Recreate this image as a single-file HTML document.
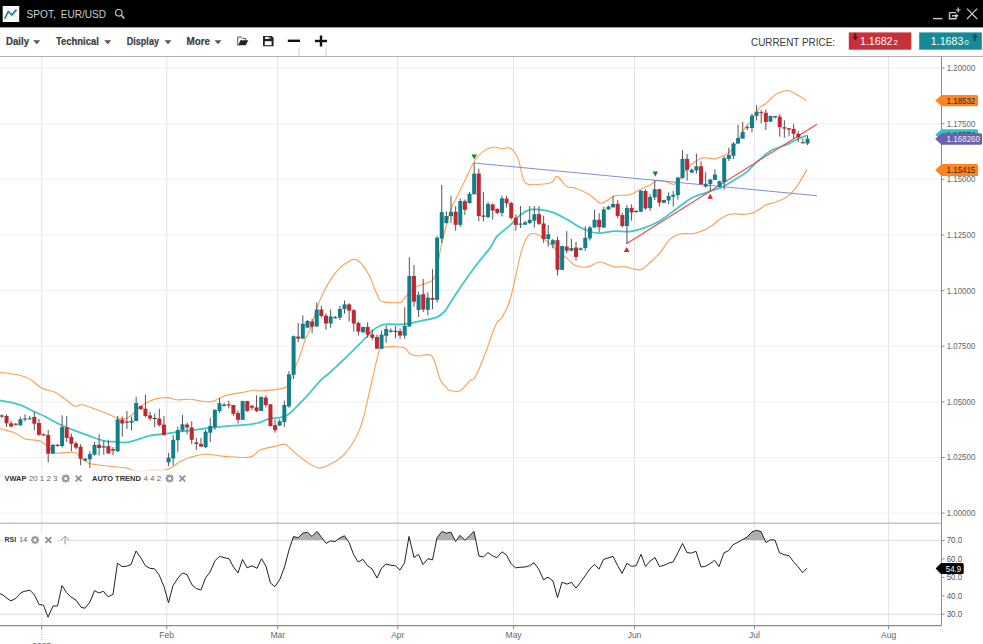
<!DOCTYPE html><html><head><meta charset="utf-8"><style>html,body{margin:0;padding:0;background:#fff;width:983px;height:644px;overflow:hidden}svg{display:block}text{font-family:"Liberation Sans",sans-serif}</style></head><body><svg width="983" height="644" viewBox="0 0 983 644"><rect width="983" height="644" fill="#fff"/><line x1="41.7" y1="56.5" x2="41.7" y2="625.6" stroke="#e3e3e3" stroke-width="1"/><line x1="166.7" y1="56.5" x2="166.7" y2="625.6" stroke="#e3e3e3" stroke-width="1"/><line x1="277.7" y1="56.5" x2="277.7" y2="625.6" stroke="#e3e3e3" stroke-width="1"/><line x1="397.8" y1="56.5" x2="397.8" y2="625.6" stroke="#e3e3e3" stroke-width="1"/><line x1="513.6" y1="56.5" x2="513.6" y2="625.6" stroke="#e3e3e3" stroke-width="1"/><line x1="634.5" y1="56.5" x2="634.5" y2="625.6" stroke="#e3e3e3" stroke-width="1"/><line x1="754.4" y1="56.5" x2="754.4" y2="625.6" stroke="#e3e3e3" stroke-width="1"/><line x1="888.6" y1="56.5" x2="888.6" y2="625.6" stroke="#e3e3e3" stroke-width="1"/><line x1="0" y1="68.1" x2="941.5" y2="68.1" stroke="#efefef" stroke-width="1"/><line x1="0" y1="123.7" x2="941.5" y2="123.7" stroke="#efefef" stroke-width="1"/><line x1="0" y1="179.3" x2="941.5" y2="179.3" stroke="#efefef" stroke-width="1"/><line x1="0" y1="235.0" x2="941.5" y2="235.0" stroke="#efefef" stroke-width="1"/><line x1="0" y1="290.6" x2="941.5" y2="290.6" stroke="#efefef" stroke-width="1"/><line x1="0" y1="346.2" x2="941.5" y2="346.2" stroke="#efefef" stroke-width="1"/><line x1="0" y1="401.9" x2="941.5" y2="401.9" stroke="#efefef" stroke-width="1"/><line x1="0" y1="457.5" x2="941.5" y2="457.5" stroke="#efefef" stroke-width="1"/><line x1="0" y1="513.1" x2="941.5" y2="513.1" stroke="#efefef" stroke-width="1"/><line x1="0" y1="540.4" x2="941.5" y2="540.4" stroke="#dcdcdc" stroke-width="1"/><line x1="0" y1="614.3" x2="941.5" y2="614.3" stroke="#dcdcdc" stroke-width="1"/><path d="M0.0,372.2 C3.3,372.7 15.0,374.0 20.0,375.2 C25.0,376.4 26.3,376.9 30.0,379.1 C33.7,381.3 37.8,386.1 42.0,388.3 C46.2,390.5 51.2,390.4 55.0,392.2 C58.8,394.0 61.7,396.8 65.0,399.1 C68.3,401.5 72.2,405.4 75.0,406.3 C77.8,407.2 78.7,404.3 82.0,404.8 C85.3,405.3 90.7,407.6 95.0,409.1 C99.3,410.6 104.3,412.4 108.0,413.9 C111.7,415.3 114.2,417.0 117.0,417.8 C119.8,418.6 122.5,419.2 125.0,418.7 C127.5,418.2 129.8,416.7 132.0,415.0 C134.2,413.3 135.5,410.6 138.0,408.5 C140.5,406.4 144.2,404.2 147.0,402.6 C149.8,401.0 151.7,399.9 155.0,399.1 C158.3,398.3 163.3,397.5 167.0,397.6 C170.7,397.7 173.2,399.5 177.0,399.8 C180.8,400.1 184.5,399.0 190.0,399.3 C195.5,399.6 204.2,402.4 210.0,401.8 C215.8,401.2 220.0,397.2 225.0,395.7 C230.0,394.2 235.0,393.8 240.0,392.9 C245.0,391.9 251.7,390.3 255.0,390.0 C258.3,389.7 255.2,391.3 260.0,391.0 C264.8,390.7 279.0,389.6 284.0,388.1 C289.0,386.6 288.2,385.2 290.0,381.9 C291.8,378.5 293.3,372.4 295.0,368.0 C296.7,363.6 298.3,360.2 300.0,355.5 C301.7,350.8 303.3,344.4 305.0,340.0 C306.7,335.6 307.5,336.0 310.0,329.3 C312.5,322.6 316.7,308.1 320.0,300.0 C323.3,291.9 326.7,285.8 330.0,280.4 C333.3,275.0 336.7,271.2 340.0,267.9 C343.3,264.6 347.3,262.1 350.0,260.7 C352.7,259.3 354.0,259.0 356.0,259.6 C358.0,260.2 359.7,261.4 362.0,264.3 C364.3,267.2 367.8,272.5 370.0,276.8 C372.2,281.1 373.3,286.1 375.0,290.0 C376.7,293.9 378.3,298.0 380.0,300.0 C381.7,302.0 381.7,301.7 385.0,302.1 C388.3,302.5 397.0,302.9 400.0,302.5 C403.0,302.1 401.3,301.9 403.0,300.0 C404.7,298.1 407.9,293.7 410.2,291.4 C412.5,289.1 413.3,288.1 417.0,286.3 C420.7,284.5 429.1,283.2 432.4,280.3 C435.7,277.4 435.3,274.8 436.7,269.2 C438.1,263.6 439.6,253.5 441.0,247.0 C442.4,240.5 443.7,235.8 445.2,230.0 C446.7,224.2 448.4,216.9 450.0,212.0 C451.6,207.1 452.5,205.8 455.0,200.5 C457.5,195.2 461.7,187.1 465.0,180.4 C468.3,173.7 471.7,165.2 475.0,160.2 C478.3,155.1 481.7,152.2 485.0,150.1 C488.3,147.9 492.2,147.5 495.0,147.3 C497.8,147.1 499.5,148.8 502.0,148.9 C504.5,149.0 507.3,146.6 510.0,148.1 C512.7,149.6 515.5,152.5 518.0,158.2 C520.5,163.9 521.3,178.1 525.0,182.4 C528.7,186.7 535.5,184.2 540.0,184.2 C544.5,184.2 549.2,183.6 552.0,182.3 C554.8,181.0 554.5,175.7 557.0,176.4 C559.5,177.1 564.0,184.6 567.0,186.5 C570.0,188.4 571.2,186.6 575.0,188.0 C578.8,189.4 585.8,192.5 590.0,195.0 C594.2,197.5 597.2,202.2 600.0,203.1 C602.8,204.0 604.5,201.7 607.0,200.5 C609.5,199.3 611.2,196.8 615.0,195.8 C618.8,194.8 625.8,195.8 630.0,194.7 C634.2,193.6 636.7,191.1 640.0,189.5 C643.3,187.9 647.2,186.5 650.0,185.0 C652.8,183.5 654.2,181.2 657.0,180.7 C659.8,180.2 664.2,181.3 667.0,181.9 C669.8,182.5 671.8,184.7 674.0,184.3 C676.2,183.9 678.2,181.8 680.0,179.6 C681.8,177.4 682.8,173.8 685.0,171.1 C687.2,168.4 690.0,165.5 693.0,163.3 C696.0,161.1 699.3,158.6 703.0,157.9 C706.7,157.2 711.3,159.4 715.0,158.9 C718.7,158.4 722.5,156.0 725.0,154.8 C727.5,153.6 728.0,153.7 730.0,151.6 C732.0,149.5 734.5,146.4 737.0,142.5 C739.5,138.6 742.8,131.4 745.0,128.0 C747.2,124.6 748.4,124.3 750.0,122.3 C751.6,120.2 753.0,118.2 754.7,115.7 C756.4,113.2 758.3,109.2 760.1,107.2 C761.9,105.2 763.0,106.0 765.5,104.0 C768.0,102.0 771.9,97.2 774.8,95.1 C777.6,93.0 780.3,92.3 782.6,91.6 C784.9,90.9 786.5,90.2 788.8,90.7 C791.1,91.2 793.5,92.8 796.5,94.4 C799.5,96.1 804.9,99.6 806.6,100.6" fill="none" stroke="#fa9f55" stroke-width="1.1" stroke-linejoin="round"/><path d="M0.0,428.7 C2.5,429.4 10.8,431.3 15.0,433.0 C19.2,434.7 20.8,437.5 25.0,438.9 C29.2,440.2 35.8,439.5 40.0,441.1 C44.2,442.7 47.5,446.7 50.0,448.7 C52.5,450.7 52.5,452.4 55.0,453.0 C57.5,453.6 61.7,452.7 65.0,452.6 C68.3,452.5 72.2,451.6 75.0,452.6 C77.8,453.6 79.5,456.7 82.0,458.5 C84.5,460.3 86.2,462.3 90.0,463.5 C93.8,464.7 99.2,465.0 105.0,465.7 C110.8,466.4 120.0,466.9 125.0,467.8 C130.0,468.7 130.8,470.7 135.0,471.1 C139.2,471.5 145.0,470.6 150.0,470.4 C155.0,470.2 161.3,470.5 165.0,470.0 C168.7,469.5 169.5,468.6 172.0,467.2 C174.5,465.8 177.0,463.3 180.0,461.7 C183.0,460.1 185.8,458.7 190.0,457.5 C194.2,456.3 199.2,454.5 205.0,454.3 C210.8,454.1 217.5,455.9 225.0,456.4 C232.5,456.9 244.2,458.2 250.0,457.1 C255.8,456.0 255.8,451.8 260.0,450.0 C264.2,448.2 270.8,447.3 275.0,446.4 C279.2,445.5 281.7,443.5 285.0,444.6 C288.3,445.7 291.7,450.2 295.0,452.9 C298.3,455.6 301.2,458.2 305.0,460.7 C308.8,463.2 313.8,467.3 318.0,467.9 C322.2,468.5 325.5,466.7 330.0,464.3 C334.5,461.9 340.0,459.6 345.0,453.6 C350.0,447.7 355.8,439.3 360.0,428.6 C364.2,417.9 367.5,399.6 370.0,389.4 C372.5,379.2 373.3,374.4 375.0,367.6 C376.7,360.8 378.3,352.1 380.0,348.7 C381.7,345.3 382.5,347.4 385.0,347.1 C387.5,346.8 391.7,346.5 395.0,346.7 C398.3,346.9 402.5,347.0 405.0,348.2 C407.5,349.4 407.8,352.4 410.0,353.7 C412.2,355.0 414.3,355.6 418.0,356.0 C421.7,356.4 428.3,352.3 432.0,356.2 C435.7,360.1 437.5,373.9 440.0,379.2 C442.5,384.5 445.3,386.3 447.0,388.2 C448.7,390.1 447.8,390.0 450.0,390.4 C452.2,390.8 456.7,392.4 460.0,390.8 C463.3,389.2 467.5,382.9 470.0,380.7 C472.5,378.5 472.5,382.0 475.0,377.6 C477.5,373.2 482.2,361.5 485.0,354.3 C487.8,347.1 490.0,339.5 492.0,334.2 C494.0,328.9 495.3,325.3 497.0,322.5 C498.7,319.7 499.8,320.9 502.0,317.2 C504.2,313.4 507.0,310.1 510.0,300.0 C513.0,289.9 517.5,266.4 520.0,256.6 C522.5,246.8 523.2,245.0 524.9,241.3 C526.5,237.6 527.6,235.3 529.9,234.2 C532.2,233.1 535.4,233.5 538.5,234.9 C541.6,236.3 545.8,240.7 548.4,242.7 C551.0,244.7 552.4,245.0 554.1,247.0 C555.8,249.0 557.2,253.0 558.4,254.8 C559.6,256.6 560.1,257.3 561.3,257.7 C562.5,258.1 563.1,255.7 565.5,257.0 C567.9,258.3 571.7,263.9 575.5,265.5 C579.3,267.1 584.3,267.5 588.3,266.9 C592.3,266.3 595.4,262.0 599.7,262.0 C604.0,262.0 609.7,266.1 614.0,266.9 C618.3,267.7 621.0,266.4 625.3,266.9 C629.6,267.4 635.9,270.5 640.0,269.8 C644.1,269.1 646.7,265.4 650.0,262.5 C653.3,259.6 656.7,256.6 660.0,252.7 C663.3,248.8 666.7,242.5 670.0,239.4 C673.3,236.3 675.8,235.0 680.0,234.0 C684.2,233.0 690.0,234.4 695.0,233.2 C700.0,232.0 705.8,229.3 710.0,227.0 C714.2,224.7 716.7,221.3 720.0,219.2 C723.3,217.1 725.8,215.0 730.0,214.2 C734.2,213.4 740.8,214.7 745.0,214.3 C749.2,213.9 751.7,213.5 755.0,212.0 C758.3,210.5 761.7,207.1 765.0,205.5 C768.3,203.9 771.7,203.4 775.0,202.2 C778.3,200.9 781.7,200.2 785.0,198.0 C788.3,195.8 791.3,193.9 795.0,189.2 C798.7,184.5 805.0,172.9 807.0,169.6" fill="none" stroke="#fa9f55" stroke-width="1.1" stroke-linejoin="round"/><line x1="474" y1="163" x2="817" y2="195.7" stroke="#7b8fe0" stroke-width="1"/><path d="M0.0,400.4 C3.3,401.1 14.5,403.0 20.0,404.8 C25.5,406.6 28.8,409.2 33.0,411.1 C37.2,413.1 40.5,414.3 45.0,416.5 C49.5,418.7 55.0,422.1 60.0,424.5 C65.0,426.9 70.0,428.7 75.0,430.6 C80.0,432.5 85.0,434.4 90.0,436.1 C95.0,437.9 100.8,440.2 105.0,441.1 C109.2,442.0 111.7,441.4 115.0,441.7 C118.3,441.9 121.7,442.8 125.0,442.6 C128.3,442.4 130.8,441.5 135.0,440.4 C139.2,439.2 145.0,436.8 150.0,435.7 C155.0,434.6 160.0,434.6 165.0,433.9 C170.0,433.2 174.2,432.5 180.0,431.7 C185.8,430.9 193.3,429.9 200.0,429.1 C206.7,428.3 211.7,427.6 220.0,426.8 C228.3,426.0 243.3,425.1 250.0,424.3 C256.7,423.6 256.7,423.3 260.0,422.3 C263.3,421.3 266.7,419.2 270.0,418.4 C273.3,417.6 277.2,418.1 280.0,417.6 C282.8,417.1 284.5,416.9 287.0,415.3 C289.5,413.8 292.0,411.2 295.0,408.3 C298.0,405.4 300.8,402.7 305.0,398.2 C309.2,393.7 315.8,385.4 320.0,381.1 C324.2,376.8 325.8,376.1 330.0,372.3 C334.2,368.5 340.0,363.1 345.0,358.3 C350.0,353.5 355.5,348.1 360.0,343.6 C364.5,339.1 368.7,334.1 372.0,331.1 C375.3,328.1 377.3,326.9 380.0,325.7 C382.7,324.5 384.7,324.4 388.0,324.2 C391.3,324.0 396.3,324.6 400.0,324.5 C403.7,324.4 406.7,324.0 410.0,323.4 C413.3,322.8 415.5,322.2 420.0,321.1 C424.5,320.1 432.8,318.8 437.0,317.1 C441.2,315.4 442.5,313.8 445.0,310.9 C447.5,308.0 449.5,303.8 452.0,300.0 C454.5,296.2 456.2,293.4 460.0,287.9 C463.8,282.3 470.0,273.3 475.0,266.7 C480.0,260.1 486.3,253.1 490.0,248.1 C493.7,243.1 493.7,240.2 497.0,236.4 C500.3,232.6 506.2,228.8 510.0,225.3 C513.8,221.8 516.7,217.8 520.0,215.2 C523.3,212.6 526.7,210.6 530.0,209.7 C533.3,208.8 536.3,209.3 540.0,209.7 C543.7,210.1 547.8,210.7 552.0,212.1 C556.2,213.5 560.3,215.8 565.0,218.3 C569.7,220.8 575.8,225.1 580.0,227.3 C584.2,229.5 586.7,230.5 590.0,231.5 C593.3,232.5 595.8,233.2 600.0,233.1 C604.2,233.0 610.0,231.3 615.0,231.1 C620.0,230.8 625.0,232.2 630.0,231.6 C635.0,231.0 640.0,229.5 645.0,227.7 C650.0,225.9 655.0,223.7 660.0,220.7 C665.0,217.7 670.0,213.5 675.0,209.9 C680.0,206.3 685.8,201.5 690.0,199.0 C694.2,196.5 695.8,196.2 700.0,194.7 C704.2,193.1 711.1,191.0 715.0,189.7 C718.9,188.3 719.6,188.5 723.3,186.6 C727.0,184.7 733.3,180.6 737.2,178.2 C741.1,175.8 743.7,174.5 746.6,172.1 C749.5,169.7 750.9,167.4 754.9,163.8 C758.9,160.2 765.5,154.0 770.8,150.8 C776.1,147.6 782.4,146.5 786.6,144.7 C790.8,142.9 792.6,141.6 795.9,140.0 C799.2,138.4 804.8,136.2 806.6,135.4" fill="none" stroke="#3ec9cb" stroke-width="1.8" stroke-linejoin="round"/><line x1="626.5" y1="243.7" x2="816.9" y2="124.2" stroke="#f04545" stroke-width="1.1"/><line x1="1.90" y1="414.4" x2="1.90" y2="417.8" stroke="#555555" stroke-width="1"/><line x1="6.53" y1="414.4" x2="6.53" y2="427.0" stroke="#555555" stroke-width="1"/><line x1="11.16" y1="421.1" x2="11.16" y2="427.5" stroke="#555555" stroke-width="1"/><line x1="15.79" y1="423.0" x2="15.79" y2="425.5" stroke="#555555" stroke-width="1"/><line x1="20.42" y1="416.8" x2="20.42" y2="426.1" stroke="#555555" stroke-width="1"/><line x1="25.05" y1="414.4" x2="25.05" y2="421.5" stroke="#555555" stroke-width="1"/><line x1="29.68" y1="416.0" x2="29.68" y2="419.6" stroke="#555555" stroke-width="1"/><line x1="34.31" y1="412.0" x2="34.31" y2="430.4" stroke="#555555" stroke-width="1"/><line x1="38.94" y1="418.9" x2="38.94" y2="436.0" stroke="#555555" stroke-width="1"/><line x1="43.57" y1="433.5" x2="43.57" y2="436.0" stroke="#555555" stroke-width="1"/><line x1="48.20" y1="429.9" x2="48.20" y2="462.5" stroke="#555555" stroke-width="1"/><line x1="52.83" y1="444.0" x2="52.83" y2="454.0" stroke="#555555" stroke-width="1"/><line x1="57.46" y1="444.0" x2="57.46" y2="446.5" stroke="#555555" stroke-width="1"/><line x1="62.09" y1="415.3" x2="62.09" y2="447.6" stroke="#555555" stroke-width="1"/><line x1="66.72" y1="415.9" x2="66.72" y2="442.0" stroke="#555555" stroke-width="1"/><line x1="71.35" y1="433.6" x2="71.35" y2="451.3" stroke="#555555" stroke-width="1"/><line x1="75.98" y1="441.4" x2="75.98" y2="449.4" stroke="#555555" stroke-width="1"/><line x1="80.61" y1="444.2" x2="80.61" y2="465.3" stroke="#555555" stroke-width="1"/><line x1="85.24" y1="457.8" x2="85.24" y2="461.5" stroke="#555555" stroke-width="1"/><line x1="89.87" y1="451.3" x2="89.87" y2="468.0" stroke="#555555" stroke-width="1"/><line x1="94.50" y1="442.0" x2="94.50" y2="455.6" stroke="#555555" stroke-width="1"/><line x1="99.13" y1="434.2" x2="99.13" y2="455.4" stroke="#555555" stroke-width="1"/><line x1="103.76" y1="440.5" x2="103.76" y2="454.7" stroke="#555555" stroke-width="1"/><line x1="108.39" y1="439.7" x2="108.39" y2="453.5" stroke="#555555" stroke-width="1"/><line x1="113.02" y1="447.0" x2="113.02" y2="455.0" stroke="#555555" stroke-width="1"/><line x1="117.65" y1="416.0" x2="117.65" y2="452.0" stroke="#555555" stroke-width="1"/><line x1="122.28" y1="416.5" x2="122.28" y2="436.7" stroke="#555555" stroke-width="1"/><line x1="126.91" y1="411.0" x2="126.91" y2="429.0" stroke="#555555" stroke-width="1"/><line x1="131.54" y1="416.5" x2="131.54" y2="430.5" stroke="#555555" stroke-width="1"/><line x1="136.17" y1="396.8" x2="136.17" y2="421.1" stroke="#555555" stroke-width="1"/><line x1="140.80" y1="405.6" x2="140.80" y2="409.5" stroke="#555555" stroke-width="1"/><line x1="145.43" y1="394.8" x2="145.43" y2="417.3" stroke="#555555" stroke-width="1"/><line x1="150.06" y1="411.8" x2="150.06" y2="420.7" stroke="#555555" stroke-width="1"/><line x1="154.69" y1="413.4" x2="154.69" y2="427.4" stroke="#555555" stroke-width="1"/><line x1="159.32" y1="408.7" x2="159.32" y2="426.6" stroke="#555555" stroke-width="1"/><line x1="163.95" y1="416.0" x2="163.95" y2="435.6" stroke="#555555" stroke-width="1"/><line x1="168.58" y1="453.0" x2="168.58" y2="466.2" stroke="#555555" stroke-width="1"/><line x1="173.21" y1="435.1" x2="173.21" y2="465.4" stroke="#555555" stroke-width="1"/><line x1="177.84" y1="426.6" x2="177.84" y2="452.2" stroke="#555555" stroke-width="1"/><line x1="182.47" y1="415.0" x2="182.47" y2="432.0" stroke="#555555" stroke-width="1"/><line x1="187.10" y1="422.7" x2="187.10" y2="434.3" stroke="#555555" stroke-width="1"/><line x1="191.73" y1="421.1" x2="191.73" y2="444.4" stroke="#555555" stroke-width="1"/><line x1="196.36" y1="437.8" x2="196.36" y2="449.9" stroke="#555555" stroke-width="1"/><line x1="200.99" y1="438.0" x2="200.99" y2="446.8" stroke="#555555" stroke-width="1"/><line x1="205.62" y1="429.9" x2="205.62" y2="448.2" stroke="#555555" stroke-width="1"/><line x1="210.25" y1="417.8" x2="210.25" y2="442.0" stroke="#555555" stroke-width="1"/><line x1="214.88" y1="408.9" x2="214.88" y2="429.9" stroke="#555555" stroke-width="1"/><line x1="219.51" y1="398.0" x2="219.51" y2="412.8" stroke="#555555" stroke-width="1"/><line x1="224.14" y1="402.8" x2="224.14" y2="406.3" stroke="#555555" stroke-width="1"/><line x1="228.77" y1="400.7" x2="228.77" y2="408.4" stroke="#555555" stroke-width="1"/><line x1="233.40" y1="405.0" x2="233.40" y2="415.9" stroke="#555555" stroke-width="1"/><line x1="238.03" y1="410.5" x2="238.03" y2="423.4" stroke="#555555" stroke-width="1"/><line x1="242.66" y1="400.7" x2="242.66" y2="419.8" stroke="#555555" stroke-width="1"/><line x1="247.29" y1="400.7" x2="247.29" y2="412.0" stroke="#555555" stroke-width="1"/><line x1="251.92" y1="405.0" x2="251.92" y2="410.0" stroke="#555555" stroke-width="1"/><line x1="256.55" y1="395.4" x2="256.55" y2="412.0" stroke="#555555" stroke-width="1"/><line x1="261.18" y1="396.5" x2="261.18" y2="411.2" stroke="#555555" stroke-width="1"/><line x1="265.81" y1="395.4" x2="265.81" y2="407.4" stroke="#555555" stroke-width="1"/><line x1="270.44" y1="404.3" x2="270.44" y2="426.8" stroke="#555555" stroke-width="1"/><line x1="275.07" y1="419.3" x2="275.07" y2="432.7" stroke="#555555" stroke-width="1"/><line x1="279.70" y1="419.3" x2="279.70" y2="426.0" stroke="#555555" stroke-width="1"/><line x1="284.33" y1="400.7" x2="284.33" y2="426.8" stroke="#555555" stroke-width="1"/><line x1="288.96" y1="371.2" x2="288.96" y2="407.8" stroke="#555555" stroke-width="1"/><line x1="293.59" y1="335.5" x2="293.59" y2="379.0" stroke="#555555" stroke-width="1"/><line x1="298.22" y1="323.0" x2="298.22" y2="342.1" stroke="#555555" stroke-width="1"/><line x1="302.85" y1="315.3" x2="302.85" y2="338.6" stroke="#555555" stroke-width="1"/><line x1="307.48" y1="319.9" x2="307.48" y2="327.7" stroke="#555555" stroke-width="1"/><line x1="312.11" y1="318.9" x2="312.11" y2="333.1" stroke="#555555" stroke-width="1"/><line x1="316.74" y1="302.4" x2="316.74" y2="326.6" stroke="#555555" stroke-width="1"/><line x1="321.37" y1="305.7" x2="321.37" y2="317.6" stroke="#555555" stroke-width="1"/><line x1="326.00" y1="313.4" x2="326.00" y2="329.7" stroke="#555555" stroke-width="1"/><line x1="330.63" y1="309.5" x2="330.63" y2="327.7" stroke="#555555" stroke-width="1"/><line x1="335.26" y1="316.0" x2="335.26" y2="318.4" stroke="#555555" stroke-width="1"/><line x1="339.89" y1="306.0" x2="339.89" y2="320.0" stroke="#555555" stroke-width="1"/><line x1="344.52" y1="300.5" x2="344.52" y2="313.7" stroke="#555555" stroke-width="1"/><line x1="349.15" y1="303.3" x2="349.15" y2="321.5" stroke="#555555" stroke-width="1"/><line x1="353.78" y1="309.0" x2="353.78" y2="331.6" stroke="#555555" stroke-width="1"/><line x1="358.41" y1="321.5" x2="358.41" y2="335.5" stroke="#555555" stroke-width="1"/><line x1="363.04" y1="326.9" x2="363.04" y2="332.4" stroke="#555555" stroke-width="1"/><line x1="367.67" y1="322.3" x2="367.67" y2="337.8" stroke="#555555" stroke-width="1"/><line x1="372.30" y1="329.3" x2="372.30" y2="340.1" stroke="#555555" stroke-width="1"/><line x1="376.93" y1="334.7" x2="376.93" y2="348.7" stroke="#555555" stroke-width="1"/><line x1="381.56" y1="330.5" x2="381.56" y2="348.7" stroke="#555555" stroke-width="1"/><line x1="386.19" y1="325.3" x2="386.19" y2="342.7" stroke="#555555" stroke-width="1"/><line x1="390.82" y1="328.4" x2="390.82" y2="332.7" stroke="#555555" stroke-width="1"/><line x1="395.45" y1="325.9" x2="395.45" y2="338.3" stroke="#555555" stroke-width="1"/><line x1="400.08" y1="328.4" x2="400.08" y2="338.9" stroke="#555555" stroke-width="1"/><line x1="404.71" y1="307.3" x2="404.71" y2="338.9" stroke="#555555" stroke-width="1"/><line x1="409.34" y1="257.3" x2="409.34" y2="326.5" stroke="#555555" stroke-width="1"/><line x1="413.97" y1="265.0" x2="413.97" y2="306.6" stroke="#555555" stroke-width="1"/><line x1="418.60" y1="291.7" x2="418.60" y2="317.0" stroke="#555555" stroke-width="1"/><line x1="423.23" y1="279.0" x2="423.23" y2="312.2" stroke="#555555" stroke-width="1"/><line x1="427.86" y1="292.4" x2="427.86" y2="315.3" stroke="#555555" stroke-width="1"/><line x1="432.49" y1="269.2" x2="432.49" y2="309.1" stroke="#555555" stroke-width="1"/><line x1="437.12" y1="236.2" x2="437.12" y2="302.5" stroke="#555555" stroke-width="1"/><line x1="441.75" y1="185.0" x2="441.75" y2="243.0" stroke="#555555" stroke-width="1"/><line x1="446.38" y1="211.3" x2="446.38" y2="223.8" stroke="#555555" stroke-width="1"/><line x1="451.01" y1="195.8" x2="451.01" y2="223.0" stroke="#555555" stroke-width="1"/><line x1="455.64" y1="206.2" x2="455.64" y2="230.7" stroke="#555555" stroke-width="1"/><line x1="460.27" y1="198.4" x2="460.27" y2="226.9" stroke="#555555" stroke-width="1"/><line x1="464.90" y1="199.4" x2="464.90" y2="215.2" stroke="#555555" stroke-width="1"/><line x1="469.53" y1="191.9" x2="469.53" y2="203.6" stroke="#555555" stroke-width="1"/><line x1="474.16" y1="162.7" x2="474.16" y2="194.3" stroke="#555555" stroke-width="1"/><line x1="478.79" y1="168.6" x2="478.79" y2="221.4" stroke="#555555" stroke-width="1"/><line x1="483.42" y1="191.9" x2="483.42" y2="221.4" stroke="#555555" stroke-width="1"/><line x1="488.05" y1="202.0" x2="488.05" y2="218.3" stroke="#555555" stroke-width="1"/><line x1="492.68" y1="203.5" x2="492.68" y2="219.7" stroke="#555555" stroke-width="1"/><line x1="497.31" y1="208.3" x2="497.31" y2="214.2" stroke="#555555" stroke-width="1"/><line x1="501.94" y1="195.5" x2="501.94" y2="216.5" stroke="#555555" stroke-width="1"/><line x1="506.57" y1="196.0" x2="506.57" y2="207.6" stroke="#555555" stroke-width="1"/><line x1="511.20" y1="201.7" x2="511.20" y2="219.6" stroke="#555555" stroke-width="1"/><line x1="515.83" y1="214.4" x2="515.83" y2="230.7" stroke="#555555" stroke-width="1"/><line x1="520.46" y1="206.0" x2="520.46" y2="228.1" stroke="#555555" stroke-width="1"/><line x1="525.09" y1="220.7" x2="525.09" y2="225.0" stroke="#555555" stroke-width="1"/><line x1="529.72" y1="205.8" x2="529.72" y2="224.0" stroke="#555555" stroke-width="1"/><line x1="534.35" y1="206.0" x2="534.35" y2="227.4" stroke="#555555" stroke-width="1"/><line x1="538.98" y1="206.0" x2="538.98" y2="225.0" stroke="#555555" stroke-width="1"/><line x1="543.61" y1="215.7" x2="543.61" y2="242.9" stroke="#555555" stroke-width="1"/><line x1="548.24" y1="225.0" x2="548.24" y2="246.5" stroke="#555555" stroke-width="1"/><line x1="552.87" y1="239.0" x2="552.87" y2="248.3" stroke="#555555" stroke-width="1"/><line x1="557.50" y1="236.7" x2="557.50" y2="275.5" stroke="#555555" stroke-width="1"/><line x1="562.13" y1="246.0" x2="562.13" y2="270.0" stroke="#555555" stroke-width="1"/><line x1="566.76" y1="231.2" x2="566.76" y2="253.0" stroke="#555555" stroke-width="1"/><line x1="571.39" y1="239.0" x2="571.39" y2="251.4" stroke="#555555" stroke-width="1"/><line x1="576.02" y1="241.8" x2="576.02" y2="260.7" stroke="#555555" stroke-width="1"/><line x1="580.65" y1="247.5" x2="580.65" y2="250.5" stroke="#555555" stroke-width="1"/><line x1="585.28" y1="226.3" x2="585.28" y2="251.0" stroke="#555555" stroke-width="1"/><line x1="589.91" y1="226.0" x2="589.91" y2="240.7" stroke="#555555" stroke-width="1"/><line x1="594.54" y1="209.7" x2="594.54" y2="227.5" stroke="#555555" stroke-width="1"/><line x1="599.17" y1="213.1" x2="599.17" y2="232.2" stroke="#555555" stroke-width="1"/><line x1="603.80" y1="206.6" x2="603.80" y2="227.5" stroke="#555555" stroke-width="1"/><line x1="608.43" y1="205.8" x2="608.43" y2="209.8" stroke="#555555" stroke-width="1"/><line x1="613.06" y1="196.0" x2="613.06" y2="207.4" stroke="#555555" stroke-width="1"/><line x1="617.69" y1="200.0" x2="617.69" y2="218.2" stroke="#555555" stroke-width="1"/><line x1="622.32" y1="212.8" x2="622.32" y2="227.5" stroke="#555555" stroke-width="1"/><line x1="626.95" y1="205.0" x2="626.95" y2="243.9" stroke="#555555" stroke-width="1"/><line x1="631.58" y1="204.3" x2="631.58" y2="220.6" stroke="#555555" stroke-width="1"/><line x1="636.21" y1="210.6" x2="636.21" y2="212.8" stroke="#555555" stroke-width="1"/><line x1="640.84" y1="190.2" x2="640.84" y2="212.0" stroke="#555555" stroke-width="1"/><line x1="645.47" y1="189.2" x2="645.47" y2="210.0" stroke="#555555" stroke-width="1"/><line x1="650.10" y1="194.2" x2="650.10" y2="210.9" stroke="#555555" stroke-width="1"/><line x1="654.73" y1="180.2" x2="654.73" y2="200.0" stroke="#555555" stroke-width="1"/><line x1="659.36" y1="188.7" x2="659.36" y2="206.6" stroke="#555555" stroke-width="1"/><line x1="663.99" y1="199.6" x2="663.99" y2="203.5" stroke="#555555" stroke-width="1"/><line x1="668.62" y1="192.3" x2="668.62" y2="204.3" stroke="#555555" stroke-width="1"/><line x1="673.25" y1="191.0" x2="673.25" y2="206.6" stroke="#555555" stroke-width="1"/><line x1="677.88" y1="176.8" x2="677.88" y2="199.6" stroke="#555555" stroke-width="1"/><line x1="682.51" y1="150.2" x2="682.51" y2="178.2" stroke="#555555" stroke-width="1"/><line x1="687.14" y1="154.0" x2="687.14" y2="180.6" stroke="#555555" stroke-width="1"/><line x1="691.77" y1="168.6" x2="691.77" y2="172.6" stroke="#555555" stroke-width="1"/><line x1="696.40" y1="153.6" x2="696.40" y2="173.6" stroke="#555555" stroke-width="1"/><line x1="701.03" y1="161.4" x2="701.03" y2="184.3" stroke="#555555" stroke-width="1"/><line x1="705.66" y1="172.2" x2="705.66" y2="187.6" stroke="#555555" stroke-width="1"/><line x1="710.29" y1="178.9" x2="710.29" y2="191.0" stroke="#555555" stroke-width="1"/><line x1="714.92" y1="169.4" x2="714.92" y2="179.9" stroke="#555555" stroke-width="1"/><line x1="719.55" y1="180.6" x2="719.55" y2="186.9" stroke="#555555" stroke-width="1"/><line x1="724.18" y1="156.1" x2="724.18" y2="189.7" stroke="#555555" stroke-width="1"/><line x1="728.81" y1="147.7" x2="728.81" y2="161.0" stroke="#555555" stroke-width="1"/><line x1="733.44" y1="142.1" x2="733.44" y2="158.9" stroke="#555555" stroke-width="1"/><line x1="738.07" y1="124.7" x2="738.07" y2="143.5" stroke="#555555" stroke-width="1"/><line x1="742.70" y1="122.1" x2="742.70" y2="138.6" stroke="#555555" stroke-width="1"/><line x1="747.33" y1="125.5" x2="747.33" y2="130.0" stroke="#555555" stroke-width="1"/><line x1="751.96" y1="113.8" x2="751.96" y2="132.4" stroke="#555555" stroke-width="1"/><line x1="756.59" y1="105.2" x2="756.59" y2="120.5" stroke="#555555" stroke-width="1"/><line x1="761.22" y1="110.0" x2="761.22" y2="123.3" stroke="#555555" stroke-width="1"/><line x1="765.85" y1="109.6" x2="765.85" y2="130.0" stroke="#555555" stroke-width="1"/><line x1="770.48" y1="115.6" x2="770.48" y2="121.9" stroke="#555555" stroke-width="1"/><line x1="775.11" y1="116.0" x2="775.11" y2="118.4" stroke="#555555" stroke-width="1"/><line x1="779.74" y1="114.2" x2="779.74" y2="136.6" stroke="#555555" stroke-width="1"/><line x1="784.37" y1="120.2" x2="784.37" y2="137.6" stroke="#555555" stroke-width="1"/><line x1="789.00" y1="128.2" x2="789.00" y2="135.9" stroke="#555555" stroke-width="1"/><line x1="793.63" y1="124.0" x2="793.63" y2="138.7" stroke="#555555" stroke-width="1"/><line x1="798.26" y1="131.0" x2="798.26" y2="142.2" stroke="#555555" stroke-width="1"/><line x1="802.89" y1="138.7" x2="802.89" y2="142.9" stroke="#555555" stroke-width="1"/><line x1="807.52" y1="135.2" x2="807.52" y2="145.0" stroke="#555555" stroke-width="1"/><rect x="-0.10" y="415.5" width="4" height="1" fill="#333"/><rect x="4.53" y="415.9" width="4" height="7.4" fill="#c4262f"/><rect x="9.16" y="423.3" width="4" height="3.2" fill="#c4262f"/><rect x="13.79" y="423.7" width="4" height="1.1" fill="#c4262f"/><rect x="18.42" y="419.3" width="4" height="5.9" fill="#107f8c"/><rect x="23.05" y="418.5" width="4" height="1.1" fill="#107f8c"/><rect x="27.68" y="418.3" width="4" height="1.0" fill="#107f8c"/><rect x="32.31" y="417.0" width="4" height="6.7" fill="#c4262f"/><rect x="36.94" y="423.0" width="4" height="11.9" fill="#c4262f"/><rect x="41.57" y="434.2" width="4" height="1.1" fill="#c4262f"/><rect x="46.20" y="434.9" width="4" height="18.8" fill="#c4262f"/><rect x="50.83" y="444.8" width="4" height="8.9" fill="#107f8c"/><rect x="55.46" y="444.8" width="4" height="1.3" fill="#c4262f"/><rect x="60.09" y="427.0" width="4" height="19.0" fill="#107f8c"/><rect x="64.72" y="427.4" width="4" height="10.5" fill="#c4262f"/><rect x="69.35" y="436.8" width="4" height="7.0" fill="#c4262f"/><rect x="73.98" y="443.3" width="4" height="4.3" fill="#c4262f"/><rect x="78.61" y="446.8" width="4" height="12.0" fill="#c4262f"/><rect x="83.24" y="458.8" width="4" height="1.8" fill="#107f8c"/><rect x="87.87" y="454.1" width="4" height="5.2" fill="#107f8c"/><rect x="92.50" y="444.8" width="4" height="9.9" fill="#107f8c"/><rect x="97.13" y="444.8" width="4" height="3.2" fill="#c4262f"/><rect x="101.76" y="446.1" width="4" height="1.5" fill="#107f8c"/><rect x="106.39" y="446.1" width="4" height="7.4" fill="#c4262f"/><rect x="111.02" y="449.0" width="4" height="1.6" fill="#c4262f"/><rect x="115.65" y="419.3" width="4" height="32.0" fill="#107f8c"/><rect x="120.28" y="419.6" width="4" height="3.9" fill="#c4262f"/><rect x="124.91" y="421.6" width="4" height="1" fill="#333"/><rect x="129.54" y="420.8" width="4" height="1.9" fill="#107f8c"/><rect x="134.17" y="403.0" width="4" height="18.1" fill="#107f8c"/><rect x="138.80" y="406.0" width="4" height="3.2" fill="#c4262f"/><rect x="143.43" y="408.7" width="4" height="7.3" fill="#c4262f"/><rect x="148.06" y="415.4" width="4" height="3.1" fill="#c4262f"/><rect x="152.69" y="418.0" width="4" height="1" fill="#333"/><rect x="157.32" y="418.5" width="4" height="6.5" fill="#c4262f"/><rect x="161.95" y="424.6" width="4" height="10.5" fill="#c4262f"/><rect x="166.58" y="457.6" width="4" height="4.7" fill="#107f8c"/><rect x="171.21" y="439.8" width="4" height="18.6" fill="#107f8c"/><rect x="175.84" y="430.0" width="4" height="10.2" fill="#107f8c"/><rect x="180.47" y="424.3" width="4" height="6.2" fill="#107f8c"/><rect x="185.10" y="424.6" width="4" height="2.8" fill="#c4262f"/><rect x="189.73" y="427.4" width="4" height="12.4" fill="#c4262f"/><rect x="194.36" y="442.4" width="4" height="1.6" fill="#c4262f"/><rect x="198.99" y="444.0" width="4" height="2.5" fill="#c4262f"/><rect x="203.62" y="431.7" width="4" height="15.3" fill="#107f8c"/><rect x="208.25" y="426.0" width="4" height="6.7" fill="#107f8c"/><rect x="212.88" y="410.0" width="4" height="17.0" fill="#107f8c"/><rect x="217.51" y="403.2" width="4" height="7.8" fill="#107f8c"/><rect x="222.14" y="404.6" width="4" height="1.5" fill="#107f8c"/><rect x="226.77" y="404.3" width="4" height="1.2" fill="#c4262f"/><rect x="231.40" y="405.0" width="4" height="8.9" fill="#c4262f"/><rect x="236.03" y="413.1" width="4" height="6.7" fill="#c4262f"/><rect x="240.66" y="401.1" width="4" height="18.7" fill="#107f8c"/><rect x="245.29" y="401.1" width="4" height="9.8" fill="#c4262f"/><rect x="249.92" y="405.8" width="4" height="1.9" fill="#c4262f"/><rect x="254.55" y="407.4" width="4" height="3.5" fill="#c4262f"/><rect x="259.18" y="397.0" width="4" height="13.9" fill="#107f8c"/><rect x="263.81" y="397.6" width="4" height="7.4" fill="#c4262f"/><rect x="268.44" y="404.3" width="4" height="21.7" fill="#c4262f"/><rect x="273.07" y="425.2" width="4" height="5.0" fill="#c4262f"/><rect x="277.70" y="421.3" width="4" height="4.2" fill="#107f8c"/><rect x="282.33" y="405.0" width="4" height="17.1" fill="#107f8c"/><rect x="286.96" y="374.3" width="4" height="32.0" fill="#107f8c"/><rect x="291.59" y="336.2" width="4" height="38.6" fill="#107f8c"/><rect x="296.22" y="336.6" width="4" height="2.0" fill="#c4262f"/><rect x="300.85" y="323.8" width="4" height="14.8" fill="#107f8c"/><rect x="305.48" y="321.0" width="4" height="6.7" fill="#107f8c"/><rect x="310.11" y="321.5" width="4" height="5.1" fill="#c4262f"/><rect x="314.74" y="309.5" width="4" height="17.1" fill="#107f8c"/><rect x="319.37" y="309.5" width="4" height="6.5" fill="#c4262f"/><rect x="324.00" y="315.7" width="4" height="7.8" fill="#c4262f"/><rect x="328.63" y="316.4" width="4" height="7.1" fill="#107f8c"/><rect x="333.26" y="317.3" width="4" height="1" fill="#333"/><rect x="337.89" y="309.0" width="4" height="8.6" fill="#107f8c"/><rect x="342.52" y="304.4" width="4" height="4.6" fill="#107f8c"/><rect x="347.15" y="304.4" width="4" height="6.2" fill="#c4262f"/><rect x="351.78" y="310.2" width="4" height="13.3" fill="#c4262f"/><rect x="356.41" y="323.0" width="4" height="8.6" fill="#c4262f"/><rect x="361.04" y="326.9" width="4" height="5.5" fill="#107f8c"/><rect x="365.67" y="326.9" width="4" height="7.8" fill="#c4262f"/><rect x="370.30" y="334.4" width="4" height="3.4" fill="#c4262f"/><rect x="374.93" y="337.0" width="4" height="11.7" fill="#c4262f"/><rect x="379.56" y="334.7" width="4" height="14.0" fill="#107f8c"/><rect x="384.19" y="329.0" width="4" height="6.8" fill="#107f8c"/><rect x="388.82" y="330.6" width="4" height="1" fill="#333"/><rect x="393.45" y="330.8" width="4" height="1" fill="#333"/><rect x="398.08" y="331.1" width="4" height="4.5" fill="#c4262f"/><rect x="402.71" y="325.9" width="4" height="9.7" fill="#107f8c"/><rect x="407.34" y="276.0" width="4" height="50.5" fill="#107f8c"/><rect x="411.97" y="276.0" width="4" height="25.7" fill="#c4262f"/><rect x="416.60" y="294.8" width="4" height="15.2" fill="#107f8c"/><rect x="421.23" y="294.2" width="4" height="15.3" fill="#c4262f"/><rect x="425.86" y="297.6" width="4" height="12.2" fill="#107f8c"/><rect x="430.49" y="298.0" width="4" height="1.8" fill="#c4262f"/><rect x="435.12" y="237.7" width="4" height="62.1" fill="#107f8c"/><rect x="439.75" y="212.1" width="4" height="26.4" fill="#107f8c"/><rect x="444.38" y="216.0" width="4" height="7.0" fill="#107f8c"/><rect x="449.01" y="211.8" width="4" height="4.2" fill="#107f8c"/><rect x="453.64" y="211.8" width="4" height="13.0" fill="#c4262f"/><rect x="458.27" y="201.0" width="4" height="23.8" fill="#107f8c"/><rect x="462.90" y="201.2" width="4" height="8.6" fill="#c4262f"/><rect x="467.53" y="193.8" width="4" height="9.3" fill="#107f8c"/><rect x="472.16" y="173.6" width="4" height="20.7" fill="#107f8c"/><rect x="476.79" y="173.6" width="4" height="42.4" fill="#c4262f"/><rect x="481.42" y="215.5" width="4" height="1.3" fill="#c4262f"/><rect x="486.05" y="204.0" width="4" height="13.1" fill="#107f8c"/><rect x="490.68" y="204.4" width="4" height="6.2" fill="#c4262f"/><rect x="495.31" y="209.0" width="4" height="3.9" fill="#c4262f"/><rect x="499.94" y="198.3" width="4" height="14.6" fill="#107f8c"/><rect x="504.57" y="198.6" width="4" height="4.7" fill="#c4262f"/><rect x="509.20" y="203.0" width="4" height="15.0" fill="#c4262f"/><rect x="513.83" y="217.9" width="4" height="7.0" fill="#c4262f"/><rect x="518.46" y="223.5" width="4" height="1.2" fill="#107f8c"/><rect x="523.09" y="222.4" width="4" height="2.3" fill="#107f8c"/><rect x="527.72" y="219.8" width="4" height="3.2" fill="#107f8c"/><rect x="532.35" y="214.2" width="4" height="6.5" fill="#107f8c"/><rect x="536.98" y="214.2" width="4" height="9.6" fill="#c4262f"/><rect x="541.61" y="223.5" width="4" height="15.5" fill="#c4262f"/><rect x="546.24" y="234.3" width="4" height="4.7" fill="#107f8c"/><rect x="550.87" y="240.2" width="4" height="4.2" fill="#107f8c"/><rect x="555.50" y="240.2" width="4" height="29.6" fill="#c4262f"/><rect x="560.13" y="246.0" width="4" height="23.8" fill="#107f8c"/><rect x="564.76" y="246.5" width="4" height="4.2" fill="#c4262f"/><rect x="569.39" y="248.0" width="4" height="2.7" fill="#107f8c"/><rect x="574.02" y="247.5" width="4" height="9.4" fill="#c4262f"/><rect x="578.65" y="248.3" width="4" height="1.6" fill="#107f8c"/><rect x="583.28" y="237.8" width="4" height="10.2" fill="#107f8c"/><rect x="587.91" y="227.5" width="4" height="10.9" fill="#107f8c"/><rect x="592.54" y="219.8" width="4" height="7.7" fill="#107f8c"/><rect x="597.17" y="219.8" width="4" height="7.3" fill="#c4262f"/><rect x="601.80" y="209.4" width="4" height="18.1" fill="#107f8c"/><rect x="606.43" y="206.6" width="4" height="2.8" fill="#107f8c"/><rect x="611.06" y="204.0" width="4" height="3.4" fill="#107f8c"/><rect x="615.69" y="203.8" width="4" height="12.1" fill="#c4262f"/><rect x="620.32" y="215.1" width="4" height="10.9" fill="#c4262f"/><rect x="624.95" y="208.1" width="4" height="17.9" fill="#107f8c"/><rect x="629.58" y="207.8" width="4" height="4.7" fill="#c4262f"/><rect x="634.21" y="210.9" width="4" height="1" fill="#333"/><rect x="638.84" y="190.7" width="4" height="20.9" fill="#107f8c"/><rect x="643.47" y="191.0" width="4" height="17.4" fill="#c4262f"/><rect x="648.10" y="197.0" width="4" height="11.1" fill="#107f8c"/><rect x="652.73" y="189.2" width="4" height="8.1" fill="#107f8c"/><rect x="657.36" y="189.2" width="4" height="13.5" fill="#c4262f"/><rect x="661.99" y="200.0" width="4" height="2.7" fill="#107f8c"/><rect x="666.62" y="196.0" width="4" height="4.4" fill="#107f8c"/><rect x="671.25" y="194.8" width="4" height="1.9" fill="#107f8c"/><rect x="675.88" y="177.6" width="4" height="17.4" fill="#107f8c"/><rect x="680.51" y="158.9" width="4" height="19.3" fill="#107f8c"/><rect x="685.14" y="158.9" width="4" height="10.9" fill="#c4262f"/><rect x="689.77" y="169.8" width="4" height="2.8" fill="#107f8c"/><rect x="694.40" y="166.2" width="4" height="4.2" fill="#107f8c"/><rect x="699.03" y="166.2" width="4" height="18.1" fill="#c4262f"/><rect x="703.66" y="183.8" width="4" height="2.8" fill="#107f8c"/><rect x="708.29" y="179.6" width="4" height="4.5" fill="#107f8c"/><rect x="712.92" y="174.6" width="4" height="5.3" fill="#107f8c"/><rect x="717.55" y="181.3" width="4" height="5.6" fill="#107f8c"/><rect x="722.18" y="158.2" width="4" height="23.8" fill="#107f8c"/><rect x="726.81" y="155.0" width="4" height="3.9" fill="#107f8c"/><rect x="731.44" y="143.5" width="4" height="12.3" fill="#107f8c"/><rect x="736.07" y="138.0" width="4" height="5.5" fill="#107f8c"/><rect x="740.70" y="131.9" width="4" height="6.7" fill="#107f8c"/><rect x="745.33" y="127.2" width="4" height="1.0" fill="#c4262f"/><rect x="749.96" y="115.6" width="4" height="12.4" fill="#107f8c"/><rect x="754.59" y="111.8" width="4" height="4.0" fill="#107f8c"/><rect x="759.22" y="112.1" width="4" height="1.0" fill="#c4262f"/><rect x="763.85" y="112.8" width="4" height="9.1" fill="#c4262f"/><rect x="768.48" y="116.0" width="4" height="5.6" fill="#107f8c"/><rect x="773.11" y="116.3" width="4" height="1" fill="#333"/><rect x="777.74" y="116.6" width="4" height="10.6" fill="#c4262f"/><rect x="782.37" y="127.2" width="4" height="1.4" fill="#c4262f"/><rect x="787.00" y="128.2" width="4" height="1.4" fill="#c4262f"/><rect x="791.63" y="128.9" width="4" height="4.9" fill="#c4262f"/><rect x="796.26" y="133.8" width="4" height="3.5" fill="#c4262f"/><rect x="800.89" y="142.3" width="4" height="1" fill="#333"/><rect x="805.52" y="138.7" width="4" height="4.9" fill="#107f8c"/><polygon points="471.4,154.5 477.0,154.5 474.2,159.5" fill="#1a8a1a"/><polygon points="652.5,171.5 658.0999999999999,171.5 655.3,176.5" fill="#1a8a1a"/><polygon points="623.9000000000001,252.0 629.5,252.0 626.7,247.0" fill="#e82020"/><polygon points="707.4000000000001,198.7 713.0,198.7 710.2,193.7" fill="#e82020"/><defs><clipPath id="ob"><rect x="0" y="523" width="941" height="17.0"/></clipPath></defs><polygon points="0.0,593.8 2.0,594.3 7.0,598.3 11.0,600.9 16.0,598.3 21.0,592.5 25.0,591.2 30.0,590.2 34.5,595.0 39.0,604.4 43.5,605.2 48.0,617.2 53.0,606.0 57.5,606.0 62.0,585.6 66.5,592.5 71.0,597.1 76.0,600.1 81.0,607.2 85.0,608.3 90.0,601.9 94.5,590.7 99.0,593.0 103.5,591.2 108.0,596.8 113.0,594.3 117.5,563.2 122.0,566.5 126.5,566.3 131.0,564.5 136.0,551.0 141.0,558.1 145.5,565.8 150.0,568.3 154.5,568.8 159.0,574.7 164.0,586.6 168.5,602.7 173.0,585.6 178.0,578.0 182.5,572.9 187.0,574.7 192.0,584.9 196.5,588.7 201.0,589.9 205.5,578.0 210.0,572.1 215.0,560.7 219.5,556.4 224.0,557.6 229.0,558.7 233.5,567.0 238.0,572.9 242.5,559.4 247.0,567.8 252.0,565.8 257.0,568.3 261.5,558.7 266.0,566.3 270.5,583.1 275.0,586.6 280.0,579.0 284.5,567.0 289.0,550.0 293.5,536.5 298.0,537.8 303.0,533.2 307.5,532.2 312.0,536.5 317.0,531.4 321.5,537.3 326.0,543.4 330.5,540.9 335.0,541.6 340.0,537.8 344.5,535.8 349.0,542.4 353.5,554.3 358.0,562.0 363.0,559.4 367.5,565.8 372.0,568.8 377.0,578.0 381.5,568.3 386.0,564.0 391.0,565.3 395.5,565.8 400.0,570.1 404.5,562.7 409.0,536.5 414.0,557.6 418.5,554.3 423.0,564.5 428.0,558.7 432.5,559.9 437.0,537.8 442.0,531.4 446.5,533.2 451.0,532.2 455.5,541.6 460.0,535.3 465.0,540.3 469.5,535.8 474.0,531.4 479.0,556.1 483.5,556.9 488.0,552.6 492.5,555.8 497.0,557.6 502.0,551.8 506.5,555.1 511.0,563.7 515.5,567.8 520.0,567.3 525.0,567.0 529.5,565.8 534.0,562.7 539.0,569.6 543.5,579.8 548.0,577.2 553.0,581.0 557.5,597.6 562.0,582.3 567.0,584.1 571.5,582.3 576.0,588.2 580.5,582.3 585.0,575.9 590.0,568.8 594.5,564.5 599.0,569.1 603.5,559.4 608.0,558.1 613.0,556.4 617.5,565.3 622.0,573.4 627.0,563.2 631.5,566.3 636.0,565.8 641.0,554.3 645.5,566.5 650.0,561.2 655.0,557.6 659.5,566.5 664.0,565.3 668.5,563.2 673.0,562.0 678.0,552.6 682.5,543.4 687.0,552.6 691.5,553.1 696.0,551.3 701.0,567.0 705.5,566.3 710.0,563.7 714.5,560.3 719.0,566.6 724.0,552.8 728.5,550.7 733.0,544.9 738.0,542.2 742.5,539.6 747.0,537.2 752.0,531.9 756.5,530.3 761.0,531.6 766.0,542.5 770.5,539.8 775.0,540.1 779.5,552.8 784.0,554.7 789.0,555.7 793.5,561.7 798.0,566.6 802.5,572.6 807.0,568.3 807,540.4 0,540.4" fill="#b0b0b0" clip-path="url(#ob)"/><polyline points="0.0,593.8 2.0,594.3 7.0,598.3 11.0,600.9 16.0,598.3 21.0,592.5 25.0,591.2 30.0,590.2 34.5,595.0 39.0,604.4 43.5,605.2 48.0,617.2 53.0,606.0 57.5,606.0 62.0,585.6 66.5,592.5 71.0,597.1 76.0,600.1 81.0,607.2 85.0,608.3 90.0,601.9 94.5,590.7 99.0,593.0 103.5,591.2 108.0,596.8 113.0,594.3 117.5,563.2 122.0,566.5 126.5,566.3 131.0,564.5 136.0,551.0 141.0,558.1 145.5,565.8 150.0,568.3 154.5,568.8 159.0,574.7 164.0,586.6 168.5,602.7 173.0,585.6 178.0,578.0 182.5,572.9 187.0,574.7 192.0,584.9 196.5,588.7 201.0,589.9 205.5,578.0 210.0,572.1 215.0,560.7 219.5,556.4 224.0,557.6 229.0,558.7 233.5,567.0 238.0,572.9 242.5,559.4 247.0,567.8 252.0,565.8 257.0,568.3 261.5,558.7 266.0,566.3 270.5,583.1 275.0,586.6 280.0,579.0 284.5,567.0 289.0,550.0 293.5,536.5 298.0,537.8 303.0,533.2 307.5,532.2 312.0,536.5 317.0,531.4 321.5,537.3 326.0,543.4 330.5,540.9 335.0,541.6 340.0,537.8 344.5,535.8 349.0,542.4 353.5,554.3 358.0,562.0 363.0,559.4 367.5,565.8 372.0,568.8 377.0,578.0 381.5,568.3 386.0,564.0 391.0,565.3 395.5,565.8 400.0,570.1 404.5,562.7 409.0,536.5 414.0,557.6 418.5,554.3 423.0,564.5 428.0,558.7 432.5,559.9 437.0,537.8 442.0,531.4 446.5,533.2 451.0,532.2 455.5,541.6 460.0,535.3 465.0,540.3 469.5,535.8 474.0,531.4 479.0,556.1 483.5,556.9 488.0,552.6 492.5,555.8 497.0,557.6 502.0,551.8 506.5,555.1 511.0,563.7 515.5,567.8 520.0,567.3 525.0,567.0 529.5,565.8 534.0,562.7 539.0,569.6 543.5,579.8 548.0,577.2 553.0,581.0 557.5,597.6 562.0,582.3 567.0,584.1 571.5,582.3 576.0,588.2 580.5,582.3 585.0,575.9 590.0,568.8 594.5,564.5 599.0,569.1 603.5,559.4 608.0,558.1 613.0,556.4 617.5,565.3 622.0,573.4 627.0,563.2 631.5,566.3 636.0,565.8 641.0,554.3 645.5,566.5 650.0,561.2 655.0,557.6 659.5,566.5 664.0,565.3 668.5,563.2 673.0,562.0 678.0,552.6 682.5,543.4 687.0,552.6 691.5,553.1 696.0,551.3 701.0,567.0 705.5,566.3 710.0,563.7 714.5,560.3 719.0,566.6 724.0,552.8 728.5,550.7 733.0,544.9 738.0,542.2 742.5,539.6 747.0,537.2 752.0,531.9 756.5,530.3 761.0,531.6 766.0,542.5 770.5,539.8 775.0,540.1 779.5,552.8 784.0,554.7 789.0,555.7 793.5,561.7 798.0,566.6 802.5,572.6 807.0,568.3" fill="none" stroke="#222" stroke-width="1" stroke-linejoin="round"/><line x1="941.5" y1="56.5" x2="941.5" y2="625.6" stroke="#8c8c8c" stroke-width="1"/><line x1="0" y1="523.2" x2="941.5" y2="523.2" stroke="#c4c4c4" stroke-width="1.6"/><line x1="0" y1="625.6" x2="941.5" y2="625.6" stroke="#8c8c8c" stroke-width="1.2"/><line x1="0" y1="56.5" x2="983" y2="56.5" stroke="#b0b0b0" stroke-width="1"/><line x1="41.7" y1="625.6" x2="41.7" y2="629" stroke="#8c8c8c" stroke-width="1"/><line x1="166.7" y1="625.6" x2="166.7" y2="629" stroke="#8c8c8c" stroke-width="1"/><line x1="277.7" y1="625.6" x2="277.7" y2="629" stroke="#8c8c8c" stroke-width="1"/><line x1="397.8" y1="625.6" x2="397.8" y2="629" stroke="#8c8c8c" stroke-width="1"/><line x1="513.6" y1="625.6" x2="513.6" y2="629" stroke="#8c8c8c" stroke-width="1"/><line x1="634.5" y1="625.6" x2="634.5" y2="629" stroke="#8c8c8c" stroke-width="1"/><line x1="754.4" y1="625.6" x2="754.4" y2="629" stroke="#8c8c8c" stroke-width="1"/><line x1="888.6" y1="625.6" x2="888.6" y2="629" stroke="#8c8c8c" stroke-width="1"/><line x1="941.5" y1="68.1" x2="944.5" y2="68.1" stroke="#8c8c8c" stroke-width="1"/><text x="946.7" y="71.0" font-size="8.2" fill="#666" textLength="28.6" lengthAdjust="spacingAndGlyphs">1.20000</text><line x1="941.5" y1="123.7" x2="944.5" y2="123.7" stroke="#8c8c8c" stroke-width="1"/><text x="946.7" y="126.6" font-size="8.2" fill="#666" textLength="28.6" lengthAdjust="spacingAndGlyphs">1.17500</text><line x1="941.5" y1="179.3" x2="944.5" y2="179.3" stroke="#8c8c8c" stroke-width="1"/><text x="946.7" y="182.2" font-size="8.2" fill="#666" textLength="28.6" lengthAdjust="spacingAndGlyphs">1.15000</text><line x1="941.5" y1="235.0" x2="944.5" y2="235.0" stroke="#8c8c8c" stroke-width="1"/><text x="946.7" y="237.9" font-size="8.2" fill="#666" textLength="28.6" lengthAdjust="spacingAndGlyphs">1.12500</text><line x1="941.5" y1="290.6" x2="944.5" y2="290.6" stroke="#8c8c8c" stroke-width="1"/><text x="946.7" y="293.5" font-size="8.2" fill="#666" textLength="28.6" lengthAdjust="spacingAndGlyphs">1.10000</text><line x1="941.5" y1="346.2" x2="944.5" y2="346.2" stroke="#8c8c8c" stroke-width="1"/><text x="946.7" y="349.1" font-size="8.2" fill="#666" textLength="28.6" lengthAdjust="spacingAndGlyphs">1.07500</text><line x1="941.5" y1="401.9" x2="944.5" y2="401.9" stroke="#8c8c8c" stroke-width="1"/><text x="946.7" y="404.8" font-size="8.2" fill="#666" textLength="28.6" lengthAdjust="spacingAndGlyphs">1.05000</text><line x1="941.5" y1="457.5" x2="944.5" y2="457.5" stroke="#8c8c8c" stroke-width="1"/><text x="946.7" y="460.4" font-size="8.2" fill="#666" textLength="28.6" lengthAdjust="spacingAndGlyphs">1.02500</text><line x1="941.5" y1="513.1" x2="944.5" y2="513.1" stroke="#8c8c8c" stroke-width="1"/><text x="946.7" y="516.0" font-size="8.2" fill="#666" textLength="28.6" lengthAdjust="spacingAndGlyphs">1.00000</text><line x1="941.5" y1="540.4" x2="944.5" y2="540.4" stroke="#8c8c8c" stroke-width="1"/><text x="946.7" y="543.3" font-size="8.2" fill="#555" textLength="15.5" lengthAdjust="spacingAndGlyphs">70.0</text><line x1="941.5" y1="558.9" x2="944.5" y2="558.9" stroke="#8c8c8c" stroke-width="1"/><text x="946.7" y="561.8" font-size="8.2" fill="#555" textLength="15.5" lengthAdjust="spacingAndGlyphs">60.0</text><line x1="941.5" y1="577.4" x2="944.5" y2="577.4" stroke="#8c8c8c" stroke-width="1"/><text x="946.7" y="580.3" font-size="8.2" fill="#555" textLength="15.5" lengthAdjust="spacingAndGlyphs">50.0</text><line x1="941.5" y1="595.8" x2="944.5" y2="595.8" stroke="#8c8c8c" stroke-width="1"/><text x="946.7" y="598.7" font-size="8.2" fill="#555" textLength="15.5" lengthAdjust="spacingAndGlyphs">40.0</text><line x1="941.5" y1="614.3" x2="944.5" y2="614.3" stroke="#8c8c8c" stroke-width="1"/><text x="946.7" y="617.2" font-size="8.2" fill="#555" textLength="15.5" lengthAdjust="spacingAndGlyphs">30.0</text><line x1="41.7" y1="629" x2="41.7" y2="640" stroke="#aaa" stroke-width="1" stroke-dasharray="1,1.5"/><text x="41.7" y="649" font-size="8.5" fill="#666" text-anchor="middle">2025</text><text x="166.7" y="638.3" font-size="8.5" fill="#666" text-anchor="middle">Feb</text><text x="277.7" y="638.3" font-size="8.5" fill="#666" text-anchor="middle">Mar</text><text x="397.8" y="638.3" font-size="8.5" fill="#666" text-anchor="middle">Apr</text><text x="513.6" y="638.3" font-size="8.5" fill="#666" text-anchor="middle">May</text><text x="634.5" y="638.3" font-size="8.5" fill="#666" text-anchor="middle">Jun</text><text x="754.4" y="638.3" font-size="8.5" fill="#666" text-anchor="middle">Jul</text><text x="888.6" y="638.3" font-size="8.5" fill="#666" text-anchor="middle">Aug</text><path d="M935.2,100.6 L941.5,95 L976.5,95 Q978,95 978,96.5 L978,104.7 Q978,106.2 976.5,106.2 L941.5,106.2 Z" fill="#fb8522"/><text x="946.6" y="103.8" font-size="9" fill="#3a2410" textLength="28.7" lengthAdjust="spacingAndGlyphs">1.18532</text><path d="M935.2,134.8 L941.5,129.2 L976.5,129.2 Q978,129.2 978,130.7 L978,139.0 Q978,140.5 976.5,140.5 L941.5,140.5 Z" fill="#33c2c4"/><text x="946.6" y="138.0" font-size="9" fill="#134" textLength="28.7" lengthAdjust="spacingAndGlyphs">1.16874</text><path d="M935.2,138.9 L941.5,133.2 L980.5,133.2 Q982,133.2 982,134.7 L982,143.2 Q982,144.7 980.5,144.7 L941.5,144.7 Z" fill="#6c61ae"/><text x="946.6" y="142.1" font-size="9" fill="#f0f0f0" textLength="33.4" lengthAdjust="spacingAndGlyphs">1.168260</text><path d="M935.2,170.1 L941.5,164.1 L976.5,164.1 Q978,164.1 978,165.6 L978,174.5 Q978,176 976.5,176 L941.5,176 Z" fill="#fb8522"/><text x="946.6" y="173.2" font-size="9" fill="#3a2410" textLength="28.7" lengthAdjust="spacingAndGlyphs">1.15415</text><rect x="2" y="470" width="190" height="17" fill="#fff" fill-opacity="0.75"/><text x="4.5" y="481.3" font-size="8" font-weight="bold" fill="#333" textLength="21.9" lengthAdjust="spacingAndGlyphs">VWAP</text><text x="28.9" y="481.3" font-size="8" fill="#666" textLength="28.5" lengthAdjust="spacingAndGlyphs">20 1 2 3</text><text x="92" y="481.3" font-size="8" font-weight="bold" fill="#333" textLength="48.8" lengthAdjust="spacingAndGlyphs">AUTO TREND</text><text x="143.4" y="481.3" font-size="8" fill="#666" textLength="17.7" lengthAdjust="spacingAndGlyphs">4 4 2</text><polygon points="70.00,478.50 68.59,479.66 68.77,481.47 66.96,481.29 65.80,482.70 64.64,481.29 62.83,481.47 63.01,479.66 61.60,478.50 63.01,477.34 62.83,475.53 64.64,475.71 65.80,474.30 66.96,475.71 68.77,475.53 68.59,477.34" fill="#999" stroke="#999" stroke-width="0.8" stroke-linejoin="round"/><circle cx="65.8" cy="478.5" r="1.5" fill="#fff"/><path d="M75.6,475.6 L81.4,481.4 M81.4,475.6 L75.6,481.4" stroke="#8f8f8f" stroke-width="1.7"/><polygon points="173.80,478.50 172.39,479.66 172.57,481.47 170.76,481.29 169.60,482.70 168.44,481.29 166.63,481.47 166.81,479.66 165.40,478.50 166.81,477.34 166.63,475.53 168.44,475.71 169.60,474.30 170.76,475.71 172.57,475.53 172.39,477.34" fill="#999" stroke="#999" stroke-width="0.8" stroke-linejoin="round"/><circle cx="169.6" cy="478.5" r="1.5" fill="#fff"/><path d="M179.4,475.6 L185.20000000000002,481.4 M185.20000000000002,475.6 L179.4,481.4" stroke="#8f8f8f" stroke-width="1.7"/><rect x="3" y="534" width="54" height="12" fill="#fff"/><text x="4.6" y="541.8" font-size="8" font-weight="bold" fill="#333" textLength="11.5" lengthAdjust="spacingAndGlyphs">RSI</text><text x="19.3" y="541.8" font-size="8" fill="#555" textLength="7.7" lengthAdjust="spacingAndGlyphs">14</text><polygon points="39.30,540.00 37.89,541.16 38.07,542.97 36.26,542.79 35.10,544.20 33.94,542.79 32.13,542.97 32.31,541.16 30.90,540.00 32.31,538.84 32.13,537.03 33.94,537.21 35.10,535.80 36.26,537.21 38.07,537.03 37.89,538.84" fill="#999" stroke="#999" stroke-width="0.8" stroke-linejoin="round"/><circle cx="35.1" cy="540" r="1.5" fill="#fff"/><path d="M45.5,537.1 L51.3,542.9 M51.3,537.1 L45.5,542.9" stroke="#8f8f8f" stroke-width="1.7"/><path d="M65,544.3 L65,536.5 M61,540 L65,536.3 L69,540" stroke="#999" stroke-width="1" fill="none"/><path d="M935.6,568.4 L941,562.9 L962.2,562.9 Q963.7,562.9 963.7,564.4 L963.7,572.4 Q963.7,573.9 962.2,573.9 L941,573.9 Z" fill="#000"/><text x="945.8" y="571.6" font-size="9" fill="#fff" textLength="15.2" lengthAdjust="spacingAndGlyphs">54.9</text><rect x="0" y="0" width="983" height="27.4" fill="#000"/><rect x="2.7" y="6" width="16.5" height="16" fill="#fff"/><path d="M4.5,8.2 H17.5 M4.5,10.5 H17.5 M4.5,13.3 H17.5 M4.5,16.5 H17.5 M4.5,19 H17.5" stroke="#e4e4e4" stroke-width="0.7"/><path d="M4.7,18.7 L8.3,11.5 L11.8,15 L16.5,9.6" stroke="#16808d" stroke-width="1.6" fill="none"/><text x="26.5" y="18.1" font-size="10" fill="#cfcfcf" textLength="29.3" lengthAdjust="spacingAndGlyphs">SPOT,</text><text x="60.8" y="18.1" font-size="10" fill="#cfcfcf" textLength="45.2" lengthAdjust="spacingAndGlyphs">EUR/USD</text><circle cx="118.8" cy="12.8" r="3.3" stroke="#ccc" stroke-width="1.1" fill="none"/><path d="M121.2,15.2 L124.5,18.5" stroke="#ccc" stroke-width="1.5"/><path d="M933,18.6 H942.6" stroke="#ccc" stroke-width="1.4"/><path d="M949.5,12.6 H956 M949.5,12.6 V18.8 H956 V17 M952,15.8 H957.5 M955.8,14.4 L957.5,15.8 L955.8,17.2" stroke="#ccc" stroke-width="1.4" fill="none"/><path d="M958.2,7.6 V12.4 M955.8,10 H960.6" stroke="#ccc" stroke-width="1.2"/><path d="M967,8.6 L977.2,19 M977.2,8.6 L967,19" stroke="#ccc" stroke-width="1.2"/><text x="6" y="44.8" font-size="10.4" font-weight="bold" fill="#3b3b3b" stroke="#3b3b3b" stroke-width="0.2" textLength="23" lengthAdjust="spacingAndGlyphs">Daily</text><polygon points="33.2,40.3 40.2,40.3 36.7,44.3" fill="#555"/><text x="56" y="44.8" font-size="10.4" font-weight="bold" fill="#3b3b3b" stroke="#3b3b3b" stroke-width="0.2" textLength="42.8" lengthAdjust="spacingAndGlyphs">Technical</text><polygon points="104.2,40.3 111.2,40.3 107.7,44.3" fill="#555"/><text x="126.7" y="44.8" font-size="10.4" font-weight="bold" fill="#3b3b3b" stroke="#3b3b3b" stroke-width="0.2" textLength="32.3" lengthAdjust="spacingAndGlyphs">Display</text><polygon points="164.5,40.3 171.5,40.3 168.0,44.3" fill="#555"/><text x="186.5" y="44.8" font-size="10.4" font-weight="bold" fill="#3b3b3b" stroke="#3b3b3b" stroke-width="0.2" textLength="23.6" lengthAdjust="spacingAndGlyphs">More</text><polygon points="214.5,40.3 221.5,40.3 218.0,44.3" fill="#555"/><path d="M238.8,45.2 H237.7 V37.1 H241.3 L242.7,38.4 H245.7 V40.3" stroke="#444" stroke-width="0.9" fill="none"/><path d="M240.3,40.3 H248.3 L245.7,45.3 H238.3 Z" fill="#222"/><path d="M263.5,35.9 H271.8 L273.6,37.7 V45.7 Q273.6,46.2 273.1,46.2 H263.5 Q263,46.2 263,45.7 V36.4 Q263,35.9 263.5,35.9 Z" fill="#222"/><rect x="265.1" y="36.9" width="5.2" height="2.1" fill="#fff"/><rect x="268.6" y="37.1" width="1.1" height="1.5" fill="#222"/><rect x="264.8" y="41.2" width="6.8" height="4.0" fill="#fff"/><rect x="287.8" y="39.6" width="12.2" height="2.4" fill="#111"/><rect x="314.9" y="39.8" width="12.1" height="2.4" fill="#111"/><rect x="319.8" y="35.5" width="2.4" height="11" fill="#111"/><path d="M299,49 V56 M326,49 V56" stroke="#d0d0d0" stroke-width="1"/><text x="751" y="46.1" font-size="11" fill="#3a3a3a" textLength="84" lengthAdjust="spacingAndGlyphs">CURRENT PRICE:</text><rect x="848.8" y="32.4" width="62.5" height="17.3" fill="#c8303a"/><text x="860" y="45.3" font-size="10.6" fill="#fff" textLength="32.5" lengthAdjust="spacingAndGlyphs">1.1682</text><text x="893.6" y="45.3" font-size="8" fill="#fff">2</text><path d="M855.2,33.2 V37.5" stroke="#6a1218" stroke-width="2.2"/><polygon points="852.2,36.8 858.2,36.8 855.2,40.6" fill="#6a1218"/><rect x="919.2" y="32.4" width="62.6" height="17.3" fill="#168b98"/><text x="930.8" y="45.3" font-size="10.6" fill="#fff" textLength="32.5" lengthAdjust="spacingAndGlyphs">1.1683</text><text x="964.3" y="45.3" font-size="8" fill="#fff">0</text><path d="M974.9,36.5 V40.8" stroke="#0d555e" stroke-width="2.2"/><polygon points="971.9,37.2 977.9,37.2 974.9,33.4" fill="#0d555e"/></svg></body></html>
